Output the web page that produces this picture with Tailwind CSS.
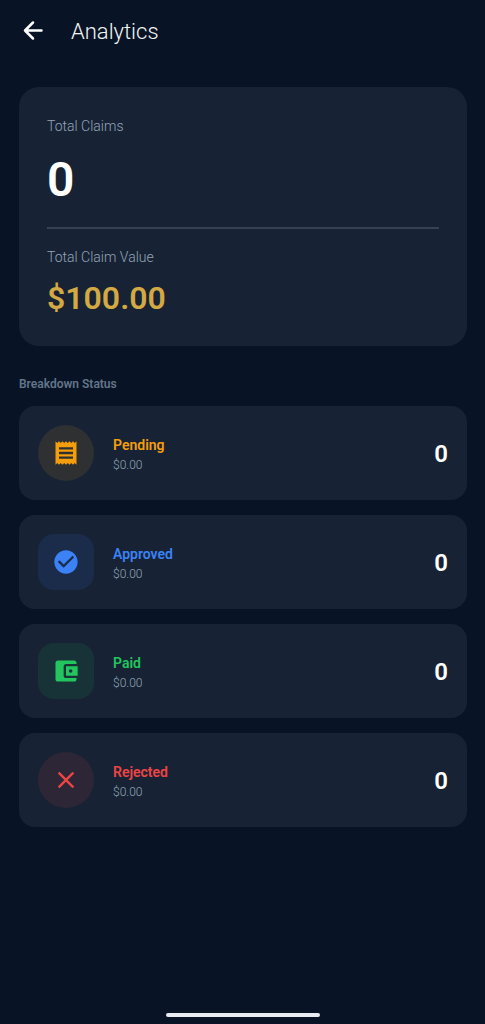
<!DOCTYPE html>
<html lang="en">
<head>
<meta charset="utf-8">
<meta name="viewport" content="width=device-width, initial-scale=1">
<title>Analytics</title>
<script src="https://cdn.jsdelivr.net/npm/@tailwindcss/browser@4"></script>
</head>
<body class="flex min-h-screen flex-col bg-[#081425] font-['Roboto',sans-serif] text-white">
<header class="flex h-[62px] items-center gap-[26px] px-[21px]">
  <button type="button" aria-label="Back" class="block">
    <svg class="size-6" viewBox="0 0 24 24" fill="none" stroke="#fff" stroke-width="2.500" stroke-linecap="round" stroke-linejoin="round"><path d="M20.500 11.500H4M12 3.500L4 11.500l8 8"/></svg>
  </button>
  <h1 class="pt-0.5 text-[22px] leading-7 font-light text-gray-100">Analytics</h1>
</header>
<main class="flex-1 pt-[25px] pr-[18px] pl-[19px]">
  <section class="rounded-[20px] bg-[#172334] px-[28px] py-[29px]">
    <h2 class="text-[14px] leading-5 font-light text-[#94a3b8]">Total Claims</h2>
    <p class="mt-4 text-[48px] leading-[56px] font-semibold">0</p>
    <hr class="mt-[19px] border-t-2 border-[#364253]">
    <h2 class="mt-[18px] text-[14px] leading-5 font-light text-[#94a3b8]">Total Claim Value</h2>
    <p class="mt-3 text-[32px] leading-[38px] font-semibold text-[#d4a943]">$100.00</p>
  </section>
  <h2 class="mt-7 text-[12px] leading-5 font-semibold text-[#64748b]">Breakdown Status</h2>
  <ul class="mt-3 flex flex-col gap-[15px]">
    <li class="flex items-center gap-[19px] rounded-2xl bg-[#172334] p-[19px]">
      <span class="flex size-14 items-center justify-center rounded-full bg-[#2e3031]">
        <svg class="size-7" viewBox="0 0 24 24" fill="#f59e0b"><path d="M18 17H6v-2h12v2zm0-4H6v-2h12v2zm0-4H6V7h12v2zM3 22l1.500-1.500L6 22l1.500-1.500L9 22l1.500-1.500L12 22l1.500-1.500L15 22l1.500-1.500L18 22l1.500-1.500L21 22V2l-1.500 1.500L18 2l-1.500 1.500L15 2l-1.500 1.500L12 2l-1.500 1.500L9 2 7.500 3.500 6 2 4.500 3.500 3 2v20z"/></svg>
      </span>
      <div class="flex-1 pt-[3px]"><h3 class="text-[14px] leading-5 font-semibold text-[#f59e0b]">Pending</h3><p class="text-[12px] leading-5 font-light text-[#94a3b8]">$0.00</p></div>
      <span class="pt-0.5 text-[24px] leading-8 font-semibold">0</span>
    </li>
    <li class="flex items-center gap-[19px] rounded-2xl bg-[#172334] p-[19px]">
      <span class="flex size-14 items-center justify-center rounded-2xl bg-[#1b2c4a]">
        <svg class="size-7" viewBox="0 0 24 24" fill="#3b82f6"><path d="M12 2C6.480 2 2 6.480 2 12s4.480 10 10 10 10-4.480 10-10S17.520 2 12 2zm-2 15l-5-5 1.410-1.410L10 14.170l7.590-7.590L19 8l-9 9z"/></svg>
      </span>
      <div class="flex-1 pt-[3px]"><h3 class="text-[14px] leading-5 font-semibold text-[#3b82f6]">Approved</h3><p class="text-[12px] leading-5 font-light text-[#94a3b8]">$0.00</p></div>
      <span class="pt-0.5 text-[24px] leading-8 font-semibold">0</span>
    </li>
    <li class="flex items-center gap-[19px] rounded-2xl bg-[#172334] p-[19px]">
      <span class="flex size-14 items-center justify-center rounded-2xl bg-[#183338]">
        <svg class="size-7" viewBox="0 0 24 24" fill="#22c55e"><path d="M21 18v1c0 1.100-.9 2-2 2H5c-1.110 0-2-.9-2-2V5c0-1.100.89-2 2-2h14c1.100 0 2 .9 2 2v1h-9c-1.110 0-2 .9-2 2v8c0 1.100.89 2 2 2h9zm-9-2h10V8H12v8zm4-2.500c-.83 0-1.500-.67-1.500-1.500s.67-1.500 1.500-1.500 1.500.67 1.500 1.500-.67 1.500-1.500 1.500z"/></svg>
      </span>
      <div class="flex-1 pt-[3px]"><h3 class="text-[14px] leading-5 font-semibold text-[#22c55e]">Paid</h3><p class="text-[12px] leading-5 font-light text-[#94a3b8]">$0.00</p></div>
      <span class="pt-0.5 text-[24px] leading-8 font-semibold">0</span>
    </li>
    <li class="flex items-center gap-[19px] rounded-2xl bg-[#172334] p-[19px]">
      <span class="flex size-14 items-center justify-center rounded-full bg-[#2d2636]">
        <svg class="size-7" viewBox="0 0 24 24" fill="#ef4444"><path d="M19 6.410L17.590 5 12 10.590 6.410 5 5 6.410 10.590 12 5 17.590 6.410 19 12 13.410 17.590 19 19 17.590 13.410 12z"/></svg>
      </span>
      <div class="flex-1 pt-[3px]"><h3 class="text-[14px] leading-5 font-semibold text-[#ef4444]">Rejected</h3><p class="text-[12px] leading-5 font-light text-[#94a3b8]">$0.00</p></div>
      <span class="pt-0.5 text-[24px] leading-8 font-semibold">0</span>
    </li>
  </ul>
</main>
<footer class="flex justify-center pt-6 pb-[7px]"><div class="h-1 w-[154px] rounded-full bg-[#e8ecf2]"></div></footer>
</body>
</html>
